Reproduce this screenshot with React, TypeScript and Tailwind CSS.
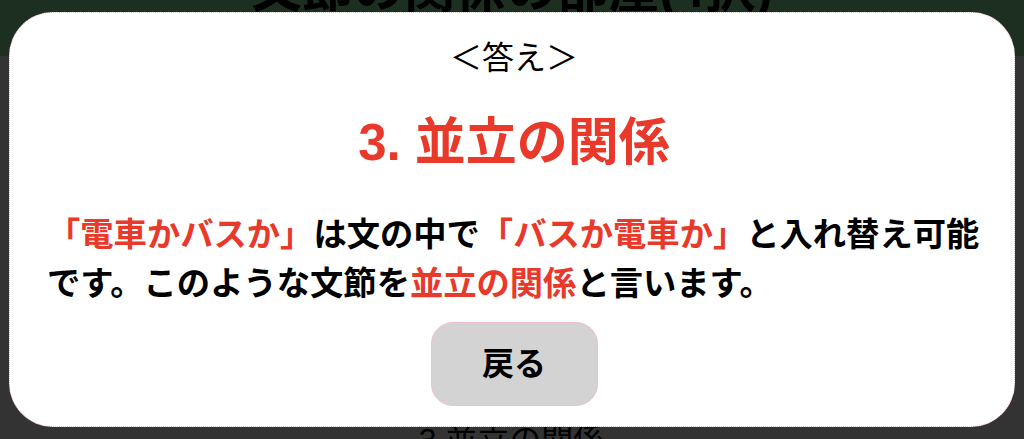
import React from 'react';

const font = { fontFamily: '"Liberation Sans", "Noto Sans CJK JP", sans-serif' };

export default function App() {
  return (
    <div className="relative h-[439px] w-full overflow-hidden bg-[#333333]" style={font}>
      {/* 背景のページ (オーバーレイで暗くなっている) */}
      <div className="flex h-[56px] justify-center overflow-hidden bg-[#1c2f20]">
        <h1 className="mt-[-35px] text-[51px] font-bold leading-[50px] text-black">文節の関係の部屋(4択)</h1>
      </div>
      <div className="flex justify-center pt-[368px]">
        <p className="text-[32px] leading-[32px] text-black">3.並立の関係</p>
      </div>

      {/* 答えのモーダル */}
      <div className="absolute left-[9px] top-[12px] flex h-[415px] w-[1006px] flex-col items-center rounded-[44px] border border-dotted border-[#f5b8c4] bg-white pl-[37px] pr-[33px]">
        <p className="mt-[25px] text-[32px] leading-[40px] text-black">＜答え＞</p>

        <h2 className="mt-[35px] text-[51px] font-bold leading-[60px] text-[#e8392b]">3. 並立の関係</h2>

        <p className="mt-[37px] w-full text-left text-[33.3px] font-bold leading-[49px] text-black">
          <span className="text-[#e8392b]">「電車かバスか」</span>は文の中で
          <span className="text-[#e8392b]">「バスか電車か」</span>と入れ替え可能です。このような文節を
          <span className="text-[#e8392b]">並立の関係</span>と言います。
        </p>

        <button className="mt-[14px] flex h-[84px] w-[167px] items-center justify-center rounded-[22px] border border-[#f0c0cc] bg-[#d3d3d3] text-[32px] font-bold text-black">
          戻る
        </button>
      </div>
    </div>
  );
}
